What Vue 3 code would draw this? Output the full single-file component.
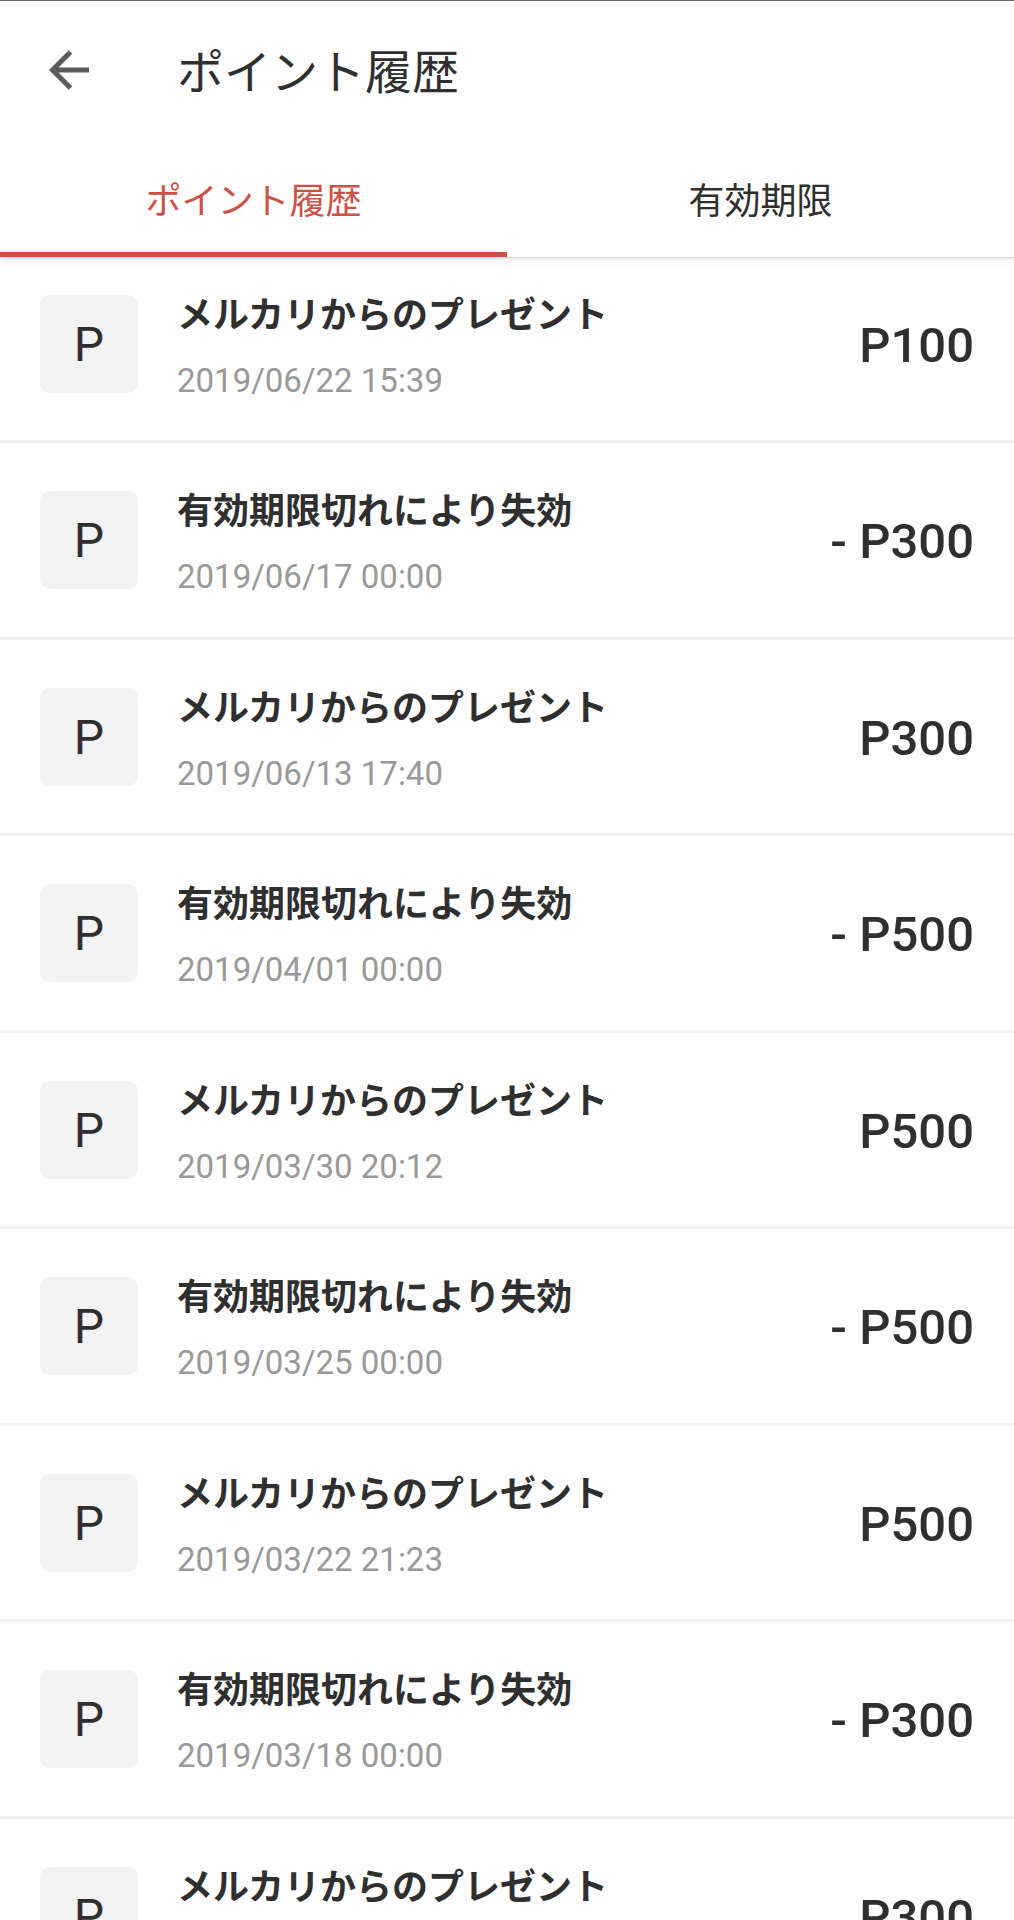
<script setup>
import { ref } from 'vue'

const tabs = ['ポイント履歴', '有効期限']
const activeTab = ref(0)

const gift = 'メルカリからのプレゼント'
const expired = '有効期限切れにより失効'

const entries = [
  { title: gift, date: '2019/06/22 15:39', amount: 'P100' },
  { title: expired, date: '2019/06/17 00:00', amount: '- P300' },
  { title: gift, date: '2019/06/13 17:40', amount: 'P300' },
  { title: expired, date: '2019/04/01 00:00', amount: '- P500' },
  { title: gift, date: '2019/03/30 20:12', amount: 'P500' },
  { title: expired, date: '2019/03/25 00:00', amount: '- P500' },
  { title: gift, date: '2019/03/22 21:23', amount: 'P500' },
  { title: expired, date: '2019/03/18 00:00', amount: '- P300' },
  { title: gift, date: '', amount: 'P300' },
]
</script>

<template>
  <div class="screen">
    <header class="app-bar">
      <div class="title-row">
        <button class="back" type="button" aria-label="戻る">
          <svg viewBox="0 0 40 40" width="40" height="40" fill="none" stroke="#5c5a5b" stroke-width="5">
            <path d="M21.500 2 3.500 20l18 18M3.500 20H40" />
          </svg>
        </button>
        <h1>ポイント履歴</h1>
      </div>
      <nav class="tabs" role="tablist">
        <button
          v-for="(tab, i) in tabs"
          :key="tab"
          type="button"
          role="tab"
          class="tab"
          :class="{ active: activeTab === i }"
          :aria-selected="activeTab === i"
          @click="activeTab = i"
        >{{ tab }}</button>
      </nav>
    </header>

    <ul class="history">
      <li v-for="(entry, i) in entries" :key="i" class="entry">
        <span class="badge" aria-hidden="true">P</span>
        <div class="detail">
          <p class="name">{{ entry.title }}</p>
          <time class="date">{{ entry.date }}</time>
        </div>
        <span class="amount">{{ entry.amount }}</span>
      </li>
    </ul>
  </div>
</template>

<style>
body {
  margin: 0;
  background: #fefefe;
}
</style>

<style scoped>
.screen {
  height: 100vh;
  display: flex;
  flex-direction: column;
  overflow: hidden;
  color: #2f2f2f;
  font-family: Roboto, "Noto Sans CJK JP", sans-serif;
}

.app-bar {
  flex: none;
  position: relative;
  border-top: 1px solid #656365;
  background: #fefefe;
  box-shadow: 0 1px 2px rgba(0, 0, 0, 0.16), 0 4px 10px rgba(0, 0, 0, 0.05);
}

.title-row {
  display: flex;
  align-items: center;
  height: 138px;
  padding-left: 49px;
}

.back,
.tab {
  padding: 0;
  border: 0;
  background: none;
  font: inherit;
  color: inherit;
  cursor: pointer;
}

.back {
  display: flex;
}

h1 {
  margin: 6px 0 0 88px;
  font-size: 47px;
  line-height: 64px;
  font-weight: 400;
}

.tabs {
  display: flex;
}

.tab {
  flex: 1;
  height: 118px;
  padding-top: 4px;
  border-bottom: 5px solid transparent;
  font-size: 36px;
}

.tab.active {
  color: #cd5046;
  border-bottom-color: #cd5046;
}

.history {
  flex: 1;
  min-height: 0;
  margin: 0;
  padding: 0;
  list-style: none;
}

.entry {
  display: flex;
  align-items: flex-start;
  gap: 39px;
  padding: 48px 40px 39px;
  border-bottom: 3px solid #f2f2f2;
}

.entry:first-child {
  padding-top: 38px;
}

.entry:nth-child(even) {
  padding-bottom: 40px;
}

.badge {
  flex: none;
  width: 98px;
  height: 98px;
  border-radius: 10px;
  background: #f3f3f3;
  font-size: 48px;
  line-height: 100px;
  text-align: center;
}

.detail {
  flex: 1;
  min-width: 0;
}

.name {
  margin: 0;
  font-size: 36px;
  line-height: 42px;
  font-weight: 700;
  white-space: nowrap;
}

.date {
  display: block;
  height: 40px;
  margin-top: 24px;
  color: #999;
  font-size: 33px;
  line-height: 40px;
}

.amount {
  font-size: 49px;
  line-height: 102px;
  font-weight: 500;
}
</style>
